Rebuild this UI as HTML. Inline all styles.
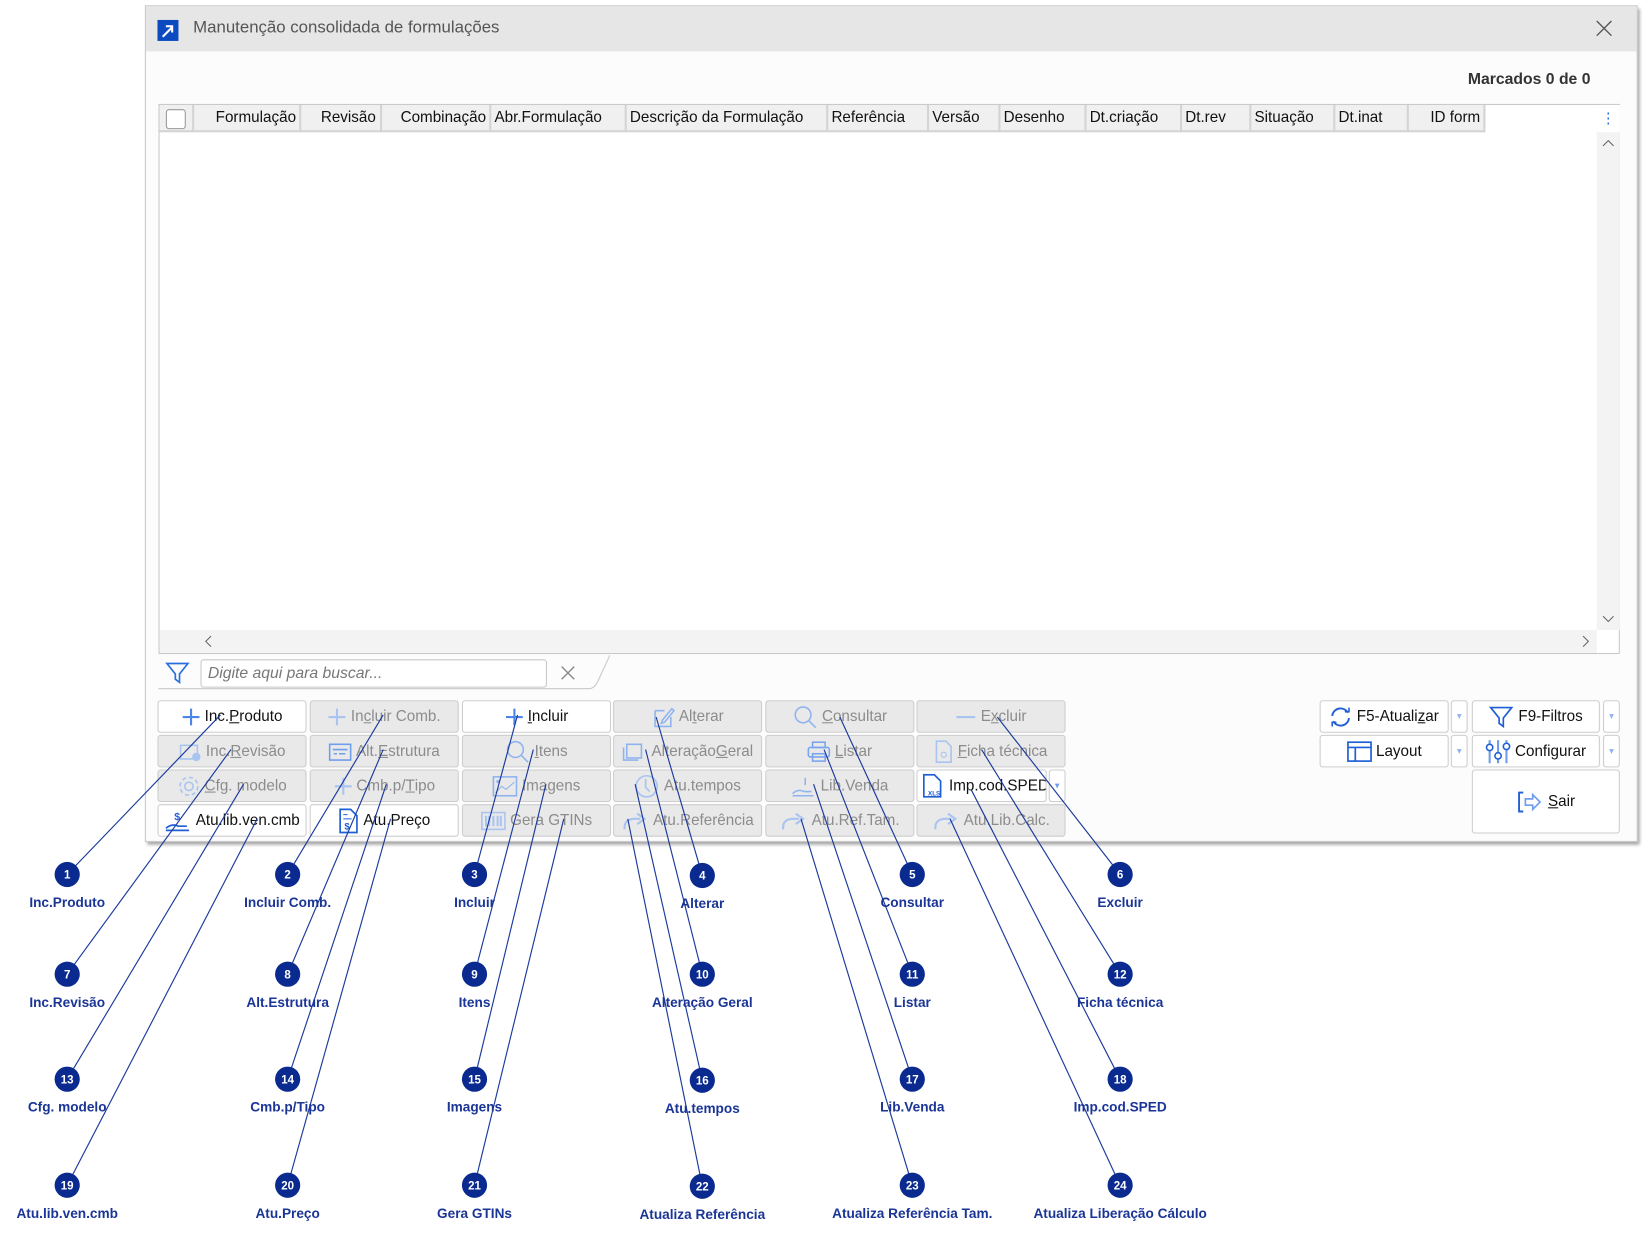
<!DOCTYPE html>
<html><head><meta charset="utf-8">
<style>
*{box-sizing:border-box;margin:0;padding:0}
html,body{width:1643px;height:1238px;overflow:hidden;background:#fff;font-family:"Liberation Sans",sans-serif}
#s{position:absolute;left:0;top:0;width:1565px;height:1179px;transform:scale(1.0498);transform-origin:0 0}
.a{position:absolute}
.win{left:138px;top:5px;width:1422px;height:797px;background:#fcfcfc;border:1px solid #c8c8c8;box-shadow:2px 3px 3px rgba(0,0,0,.35)}
.tb{left:0;top:0;width:100%;height:43px;background:#e6e6e6}
.b{position:absolute;height:31px;border:1px solid #cdcdcd;border-radius:3px;background:#e9e9e9;color:#8c8c8c;font-size:14.5px;display:flex;align-items:center;justify-content:center;white-space:nowrap;overflow:hidden}
.b.e{background:#fff;color:#111}
.b svg{margin-right:4px;flex:none}
.hd{position:absolute;top:0;height:26px;border-right:2px solid #d4d4d4;font-size:14.5px;line-height:25px;color:#111;text-align:center;white-space:nowrap}
.lb{font-family:"Liberation Sans",sans-serif;font-weight:bold;font-size:13px;fill:#1a3596}
.cn{font-family:"Liberation Sans",sans-serif;font-weight:bold;font-size:11px;fill:#fff}
</style></head><body><div id="s">
<div class="a win">
 <div class="a tb">
  <div class="a" style="left:11px;top:13px;width:20px;height:20px;background:#0b4bbf"></div>
  <svg class="a" style="left:11px;top:13px" width="20" height="20"><path d="M5 16 L14 7 M8 6 H14 V12" stroke="#fff" stroke-width="2" fill="none"/></svg>
  <div class="a" style="left:45px;top:12px;font-size:16px;color:#555">Manutenção consolidada de formulações</div>
  <svg class="a" style="left:1381px;top:13px" width="16" height="16"><path d="M1 1L15 15M15 1L1 15" stroke="#555" stroke-width="1.3"/></svg>
 </div>
 <div class="a" style="right:44px;top:61px;font-size:15px;font-weight:bold;color:#333">Marcados 0 de 0</div>
 <div class="a" style="left:12px;top:93px;width:1392px;height:524px;border:1px solid #c8c8c8;background:#fff">
  <div class="a" style="left:0;top:0;width:1262px;height:26px;background:#f0f0f0;border-bottom:2px solid #d4d4d4"></div>
  <div class="a" style="left:1369px;top:0;width:22px;height:500px;background:#f3f3f3"></div>
  <div class="a" style="left:1369px;top:0;width:22px;height:26px;background:#fff;color:#2a6fe0;text-align:center;font-size:14px;line-height:24px">⋮</div>
  <svg class="a" style="left:1374px;top:32px" width="12" height="8"><path d="M1 7L6 2L11 7" stroke="#666" fill="none"/></svg>
  <svg class="a" style="left:1374px;top:486px" width="12" height="8"><path d="M1 1L6 6L11 1" stroke="#666" fill="none"/></svg>
  <div class="a" style="left:0;top:500px;width:1369px;height:22px;background:#f3f3f3"></div>
  <svg class="a" style="left:42px;top:505px" width="8" height="12"><path d="M7 1L2 6L7 11" stroke="#666" fill="none"/></svg>
  <svg class="a" style="left:1355px;top:505px" width="8" height="12"><path d="M1 1L6 6L1 11" stroke="#666" fill="none"/></svg>
  <div class="a" style="left:6px;top:4px;width:19px;height:19px;border:1px solid #999;border-radius:3px;background:#fff"></div>
  <div class="hd" style="left:0;width:33px"></div>
  <div class="hd" style="left:33px;width:102px;text-align:right;padding-right:3px">Formulação</div>
  <div class="hd" style="left:135px;width:77px;text-align:right;padding-right:4px">Revisão</div>
  <div class="hd" style="left:212px;width:104px;text-align:right;padding-right:3px">Combinação</div>
  <div class="hd" style="left:316px;width:129px;text-align:left;padding-left:3px">Abr.Formulação</div>
  <div class="hd" style="left:445px;width:192px;text-align:left;padding-left:3px">Descrição da Formulação</div>
  <div class="hd" style="left:637px;width:96px;text-align:left;padding-left:3px">Referência</div>
  <div class="hd" style="left:733px;width:68px;text-align:left;padding-left:3px">Versão</div>
  <div class="hd" style="left:801px;width:82px;text-align:left;padding-left:3px">Desenho</div>
  <div class="hd" style="left:883px;width:91px;text-align:left;padding-left:3px">Dt.criação</div>
  <div class="hd" style="left:974px;width:66px;text-align:left;padding-left:3px">Dt.rev</div>
  <div class="hd" style="left:1040px;width:80px;text-align:left;padding-left:3px">Situação</div>
  <div class="hd" style="left:1120px;width:70px;text-align:left;padding-left:3px">Dt.inat</div>
  <div class="hd" style="left:1190px;width:73px;text-align:right;padding-right:3px">ID form</div>
 </div>
 <svg class="a" style="left:18px;top:624px" width="24" height="22"><path d="M2 2H22L14 12V20L10 17V12Z" stroke="#2a6fe0" stroke-width="1.6" fill="none"/></svg>
 <div class="a" style="left:52px;top:622px;width:330px;height:27px;border:1px solid #c8c8c8;border-radius:3px;background:#fff;font-style:italic;color:#777;font-size:15px;line-height:25px;padding-left:6px">Digite aqui para buscar...</div>
 <svg class="a" style="left:395px;top:628px" width="14" height="14"><path d="M1 1L13 13M13 1L1 13" stroke="#888" stroke-width="1.3"/></svg>
 <svg class="a" style="left:12px;top:616px" width="430" height="36"><path d="M0 34H410Q415 34 418 28L430 2" stroke="#c8c8c8" fill="none"/></svg>
</div>

<div class="b e" style="left:150px;top:667px;width:142px"><svg width="18" height="18"><path d="M9 1V17M1 9H17" stroke="#4a86e8" stroke-width="2"/></svg>Inc.<u>P</u>roduto</div>
<div class="b" style="left:295px;top:667px;width:142px"><svg width="18" height="18"><path d="M9 1V17M1 9H17" stroke="#a9c4f0" stroke-width="2"/></svg>In<u>c</u>luir Comb.</div>
<div class="b e" style="left:440px;top:667px;width:142px"><svg width="18" height="18"><path d="M9 1V17M1 9H17" stroke="#4a86e8" stroke-width="2"/></svg><u>I</u>ncluir</div>
<div class="b" style="left:584px;top:667px;width:142px"><svg width="22" height="22"><path d="M3 5H12M3 5V20H18V11M10 14L19 3L21 5L12 16L9 17Z" stroke="#8fb3ee" stroke-width="1.5" fill="none"/></svg>Al<u>t</u>erar</div>
<div class="b" style="left:729px;top:667px;width:142px"><svg width="24" height="22"><circle cx="10" cy="9" r="7.5" stroke="#8fb3ee" stroke-width="1.5" fill="none"/><path d="M15 14L22 21" stroke="#8fb3ee" stroke-width="1.5"/></svg><u>C</u>onsultar</div>
<div class="b" style="left:873px;top:667px;width:142px"><svg width="20" height="18"><path d="M1 9H19" stroke="#a9c4f0" stroke-width="2"/></svg>E<u>x</u>cluir</div>

<div class="b" style="left:150px;top:700px;width:142px"><svg width="22" height="20"><rect x="2" y="4" width="16" height="13" stroke="#a9c4f0" fill="none" stroke-width="1.5"/><circle cx="17" cy="15" r="4" fill="#a9c4f0"/></svg>Inc.<u>R</u>evisão</div>
<div class="b" style="left:295px;top:700px;width:142px"><svg width="22" height="18"><rect x="1" y="2" width="20" height="15" stroke="#6f9ded" fill="none" stroke-width="1.5"/><path d="M4 7H18M5 11H8M10 11H16" stroke="#6f9ded" stroke-width="1.5"/></svg>Alt.<u>E</u>strutura</div>
<div class="b" style="left:440px;top:700px;width:142px"><svg width="24" height="22"><circle cx="10" cy="9" r="7.5" stroke="#8fb3ee" stroke-width="1.5" fill="none"/><path d="M15 14L22 21" stroke="#8fb3ee" stroke-width="1.5"/></svg><u>I</u>tens</div>
<div class="b" style="left:584px;top:700px;width:142px"><svg width="24" height="20"><rect x="4" y="3" width="14" height="13" stroke="#8fb3ee" fill="none" stroke-width="1.5"/><path d="M1 6V18H15" stroke="#8fb3ee" fill="none" stroke-width="1.5"/></svg>Alteração <u>G</u>eral</div>
<div class="b" style="left:729px;top:700px;width:142px"><svg width="22" height="22"><rect x="5" y="2" width="12" height="5" stroke="#7aa5ee" fill="none" stroke-width="1.5"/><rect x="1" y="7" width="20" height="9" rx="2" stroke="#7aa5ee" fill="none" stroke-width="1.5"/><rect x="5" y="13" width="12" height="7" stroke="#7aa5ee" fill="none" stroke-width="1.5"/></svg><u>L</u>istar</div>
<div class="b" style="left:873px;top:700px;width:142px"><svg width="18" height="22"><path d="M2 1H11L16 6V21H2Z" stroke="#a9c4f0" fill="none" stroke-width="1.5"/><circle cx="9" cy="14" r="2.5" stroke="#a9c4f0" fill="none"/></svg><u>F</u>icha técnica</div>

<div class="b" style="left:150px;top:733px;width:142px"><svg width="22" height="22"><circle cx="11" cy="11" r="4" stroke="#a9c4f0" fill="none" stroke-width="1.5"/><circle cx="11" cy="11" r="8.5" stroke="#a9c4f0" fill="none" stroke-width="1.5" stroke-dasharray="4 2.6"/></svg><u>C</u>fg. modelo</div>
<div class="b" style="left:295px;top:733px;width:142px"><svg width="18" height="18"><path d="M9 1V17M1 9H17" stroke="#a9c4f0" stroke-width="2"/></svg>Cmb.p/<u>T</u>ipo</div>
<div class="b" style="left:440px;top:733px;width:142px"><svg width="24" height="22"><rect x="1" y="2" width="22" height="18" stroke="#8fb3ee" fill="none" stroke-width="1.5"/><path d="M3 17L9 11L13 14L21 7" stroke="#8fb3ee" fill="none"/><rect x="4" y="5" width="3" height="3" fill="#8fb3ee"/></svg>Imagens</div>
<div class="b" style="left:584px;top:733px;width:142px"><svg width="24" height="24"><circle cx="12" cy="12" r="10" stroke="#a9c4f0" fill="none" stroke-width="1.6"/><path d="M11 5V13L15 17" stroke="#a9c4f0" fill="none" stroke-width="1.6"/></svg>Atu.tempos</div>
<div class="b" style="left:729px;top:733px;width:142px"><svg width="24" height="20"><path d="M1 17Q6 12 12 15H19M1 19H21M13 2V9" stroke="#8fb3ee" fill="none" stroke-width="1.5"/></svg>Lib.Venda</div>
<div class="b e" style="left:873px;top:733px;width:124px;justify-content:flex-start;padding-left:4px"><svg width="22" height="24"><path d="M2 1H12L18 7V22H2Z" stroke="#1f5fd6" fill="none" stroke-width="1.6"/><text x="6" y="21" font-size="6" fill="#1f5fd6" font-family="Liberation Sans" font-weight="bold">XLS</text></svg>Imp.cod.SPED</div>
<div class="b e" style="left:999px;top:733px;width:16px;color:#6f9ded;font-size:9px">▾</div>

<div class="b e" style="left:150px;top:766px;width:142px"><svg width="26" height="22"><path d="M2 18Q8 13 14 16H22M2 20H24" stroke="#1f5fd6" fill="none" stroke-width="1.6"/><text x="10" y="10" font-size="10" fill="#1f5fd6" font-family="Liberation Sans" font-weight="bold">$</text></svg>Atu.lib.ven.cmb</div>
<div class="b e" style="left:295px;top:766px;width:142px"><svg width="20" height="24"><path d="M2 1H12L18 7V23H2Z" stroke="#1f5fd6" fill="none" stroke-width="1.6"/><path d="M5 6H9M5 10H13" stroke="#1f5fd6"/><text x="6" y="20" font-size="9" fill="#1f5fd6" font-family="Liberation Sans" font-weight="bold">$</text></svg>Atu.Preço</div>
<div class="b" style="left:440px;top:766px;width:142px"><svg width="24" height="20"><rect x="1" y="2" width="22" height="16" stroke="#a9c4f0" fill="none" stroke-width="1.5"/><path d="M5 5V15M8 5V15M12 5V15M16 5V15M19 5V15" stroke="#a9c4f0" stroke-width="2"/></svg>Gera GTINs</div>
<div class="b" style="left:584px;top:766px;width:142px"><svg width="26" height="22"><path d="M3 19Q2 9 13 9H18M15 4L22 9L15 14" stroke="#a9c4f0" fill="none" stroke-width="2"/></svg>Atu.Referência</div>
<div class="b" style="left:729px;top:766px;width:142px"><svg width="26" height="22"><path d="M3 19Q2 9 13 9H18M15 4L22 9L15 14" stroke="#a9c4f0" fill="none" stroke-width="2"/></svg>Atu.Ref.Tam.</div>
<div class="b" style="left:873px;top:766px;width:142px"><svg width="26" height="22"><path d="M3 19Q2 9 13 9H18M15 4L22 9L15 14" stroke="#a9c4f0" fill="none" stroke-width="2"/></svg>Atu.Lib.Calc.</div>

<div class="b e" style="left:1257px;top:667px;width:123px;background:#fff"><svg width="22" height="22"><path d="M3 10A8 8 0 0 1 18 7M19 12A8 8 0 0 1 4 15" stroke="#1f5fd6" fill="none" stroke-width="1.8"/><path d="M15 6H19V2M7 16H3V20" stroke="#1f5fd6" fill="none" stroke-width="1.5"/></svg>F5-Atuali<u>z</u>ar</div>
<div class="b e" style="left:1382px;top:667px;width:16px;color:#8fb3ee;font-size:9px">▾</div>
<div class="b e" style="left:1402px;top:667px;width:122px"><svg width="24" height="22"><path d="M2 2H22L14 12V20L10 17V12Z" stroke="#1f5fd6" stroke-width="1.6" fill="none"/></svg>F9-Filtros</div>
<div class="b e" style="left:1527px;top:667px;width:16px;color:#8fb3ee;font-size:9px">▾</div>
<div class="b e" style="left:1257px;top:700px;width:123px"><svg width="24" height="22"><rect x="1" y="2" width="22" height="18" stroke="#1f5fd6" fill="none" stroke-width="1.6"/><path d="M1 7H23M8 7V20" stroke="#1f5fd6" stroke-width="1.6"/></svg>Layout</div>
<div class="b e" style="left:1382px;top:700px;width:16px;color:#8fb3ee;font-size:9px">▾</div>
<div class="b e" style="left:1402px;top:700px;width:122px"><svg width="24" height="24"><path d="M4 1V23M12 1V23M20 1V23" stroke="#6f9ded" stroke-width="2"/><circle cx="4" cy="8" r="3" fill="#fff" stroke="#1f5fd6" stroke-width="1.5"/><circle cx="12" cy="16" r="3" fill="#fff" stroke="#1f5fd6" stroke-width="1.5"/><circle cx="20" cy="7" r="3" fill="#fff" stroke="#1f5fd6" stroke-width="1.5"/></svg>Configurar</div>
<div class="b e" style="left:1527px;top:700px;width:16px;color:#8fb3ee;font-size:9px">▾</div>
<div class="b e" style="left:1402px;top:733px;width:141px;height:61px"><svg width="26" height="22"><path d="M6 2H2V20H6" stroke="#1f5fd6" fill="none" stroke-width="1.8"/><path d="M8 8H15V4L22 11L15 18V14H8Z" stroke="#6f9ded" fill="none" stroke-width="1.6"/></svg><u>S</u>air</div>

<svg class="a" style="left:0;top:0" width="1565" height="1179">
<g stroke="#1b3a9c" stroke-width="1.1">
<line x1="210" y1="681" x2="64" y2="833"/>
<line x1="365" y1="681" x2="274" y2="833"/>
<line x1="493" y1="681" x2="452" y2="833"/>
<line x1="625" y1="683" x2="669" y2="834"/>
<line x1="800" y1="683" x2="869" y2="833"/>
<line x1="950" y1="683" x2="1067" y2="833"/>
<line x1="220" y1="714" x2="64" y2="928"/>
<line x1="365" y1="714" x2="274" y2="928"/>
<line x1="508" y1="714" x2="452" y2="928"/>
<line x1="615" y1="714" x2="669" y2="928"/>
<line x1="785" y1="714" x2="869" y2="928"/>
<line x1="935" y1="714" x2="1067" y2="928"/>
<line x1="232" y1="747" x2="64" y2="1028"/>
<line x1="368" y1="747" x2="274" y2="1028"/>
<line x1="520" y1="747" x2="452" y2="1028"/>
<line x1="605" y1="747" x2="669" y2="1029"/>
<line x1="775" y1="747" x2="869" y2="1028"/>
<line x1="925" y1="752" x2="1067" y2="1028"/>
<line x1="245" y1="780" x2="64" y2="1129"/>
<line x1="372" y1="780" x2="274" y2="1129"/>
<line x1="537" y1="780" x2="452" y2="1129"/>
<line x1="598" y1="780" x2="669" y2="1130"/>
<line x1="763" y1="780" x2="869" y2="1129"/>
<line x1="905" y1="780" x2="1067" y2="1129"/>
</g>
<g fill="#0a2a8f">
<circle cx="64" cy="833" r="12"/><circle cx="274" cy="833" r="12"/><circle cx="452" cy="833" r="12"/><circle cx="669" cy="834" r="12"/><circle cx="869" cy="833" r="12"/><circle cx="1067" cy="833" r="12"/>
<circle cx="64" cy="928" r="12"/><circle cx="274" cy="928" r="12"/><circle cx="452" cy="928" r="12"/><circle cx="669" cy="928" r="12"/><circle cx="869" cy="928" r="12"/><circle cx="1067" cy="928" r="12"/>
<circle cx="64" cy="1028" r="12"/><circle cx="274" cy="1028" r="12"/><circle cx="452" cy="1028" r="12"/><circle cx="669" cy="1029" r="12"/><circle cx="869" cy="1028" r="12"/><circle cx="1067" cy="1028" r="12"/>
<circle cx="64" cy="1129" r="12"/><circle cx="274" cy="1129" r="12"/><circle cx="452" cy="1129" r="12"/><circle cx="669" cy="1130" r="12"/><circle cx="869" cy="1129" r="12"/><circle cx="1067" cy="1129" r="12"/>
</g>
<g text-anchor="middle">
<text x="64" y="837" class="cn">1</text><text x="274" y="837" class="cn">2</text><text x="452" y="837" class="cn">3</text><text x="669" y="838" class="cn">4</text><text x="869" y="837" class="cn">5</text><text x="1067" y="837" class="cn">6</text>
<text x="64" y="932" class="cn">7</text><text x="274" y="932" class="cn">8</text><text x="452" y="932" class="cn">9</text><text x="669" y="932" class="cn">10</text><text x="869" y="932" class="cn">11</text><text x="1067" y="932" class="cn">12</text>
<text x="64" y="1032" class="cn">13</text><text x="274" y="1032" class="cn">14</text><text x="452" y="1032" class="cn">15</text><text x="669" y="1033" class="cn">16</text><text x="869" y="1032" class="cn">17</text><text x="1067" y="1032" class="cn">18</text>
<text x="64" y="1133" class="cn">19</text><text x="274" y="1133" class="cn">20</text><text x="452" y="1133" class="cn">21</text><text x="669" y="1134" class="cn">22</text><text x="869" y="1133" class="cn">23</text><text x="1067" y="1133" class="cn">24</text>
</g>
<g text-anchor="middle">
<text x="64" y="864" class="lb">Inc.Produto</text><text x="274" y="864" class="lb">Incluir Comb.</text><text x="452" y="864" class="lb">Incluir</text><text x="669" y="865" class="lb">Alterar</text><text x="869" y="864" class="lb">Consultar</text><text x="1067" y="864" class="lb">Excluir</text>
<text x="64" y="959" class="lb">Inc.Revisão</text><text x="274" y="959" class="lb">Alt.Estrutura</text><text x="452" y="959" class="lb">Itens</text><text x="669" y="959" class="lb">Alteração Geral</text><text x="869" y="959" class="lb">Listar</text><text x="1067" y="959" class="lb">Ficha técnica</text>
<text x="64" y="1059" class="lb">Cfg. modelo</text><text x="274" y="1059" class="lb">Cmb.p/Tipo</text><text x="452" y="1059" class="lb">Imagens</text><text x="669" y="1060" class="lb">Atu.tempos</text><text x="869" y="1059" class="lb">Lib.Venda</text><text x="1067" y="1059" class="lb">Imp.cod.SPED</text>
<text x="64" y="1160" class="lb">Atu.lib.ven.cmb</text><text x="274" y="1160" class="lb">Atu.Preço</text><text x="452" y="1160" class="lb">Gera GTINs</text><text x="669" y="1161" class="lb">Atualiza Referência</text><text x="869" y="1160" class="lb">Atualiza Referência Tam.</text><text x="1067" y="1160" class="lb">Atualiza Liberação Cálculo</text>
</g>
</svg>
</div></body></html>
